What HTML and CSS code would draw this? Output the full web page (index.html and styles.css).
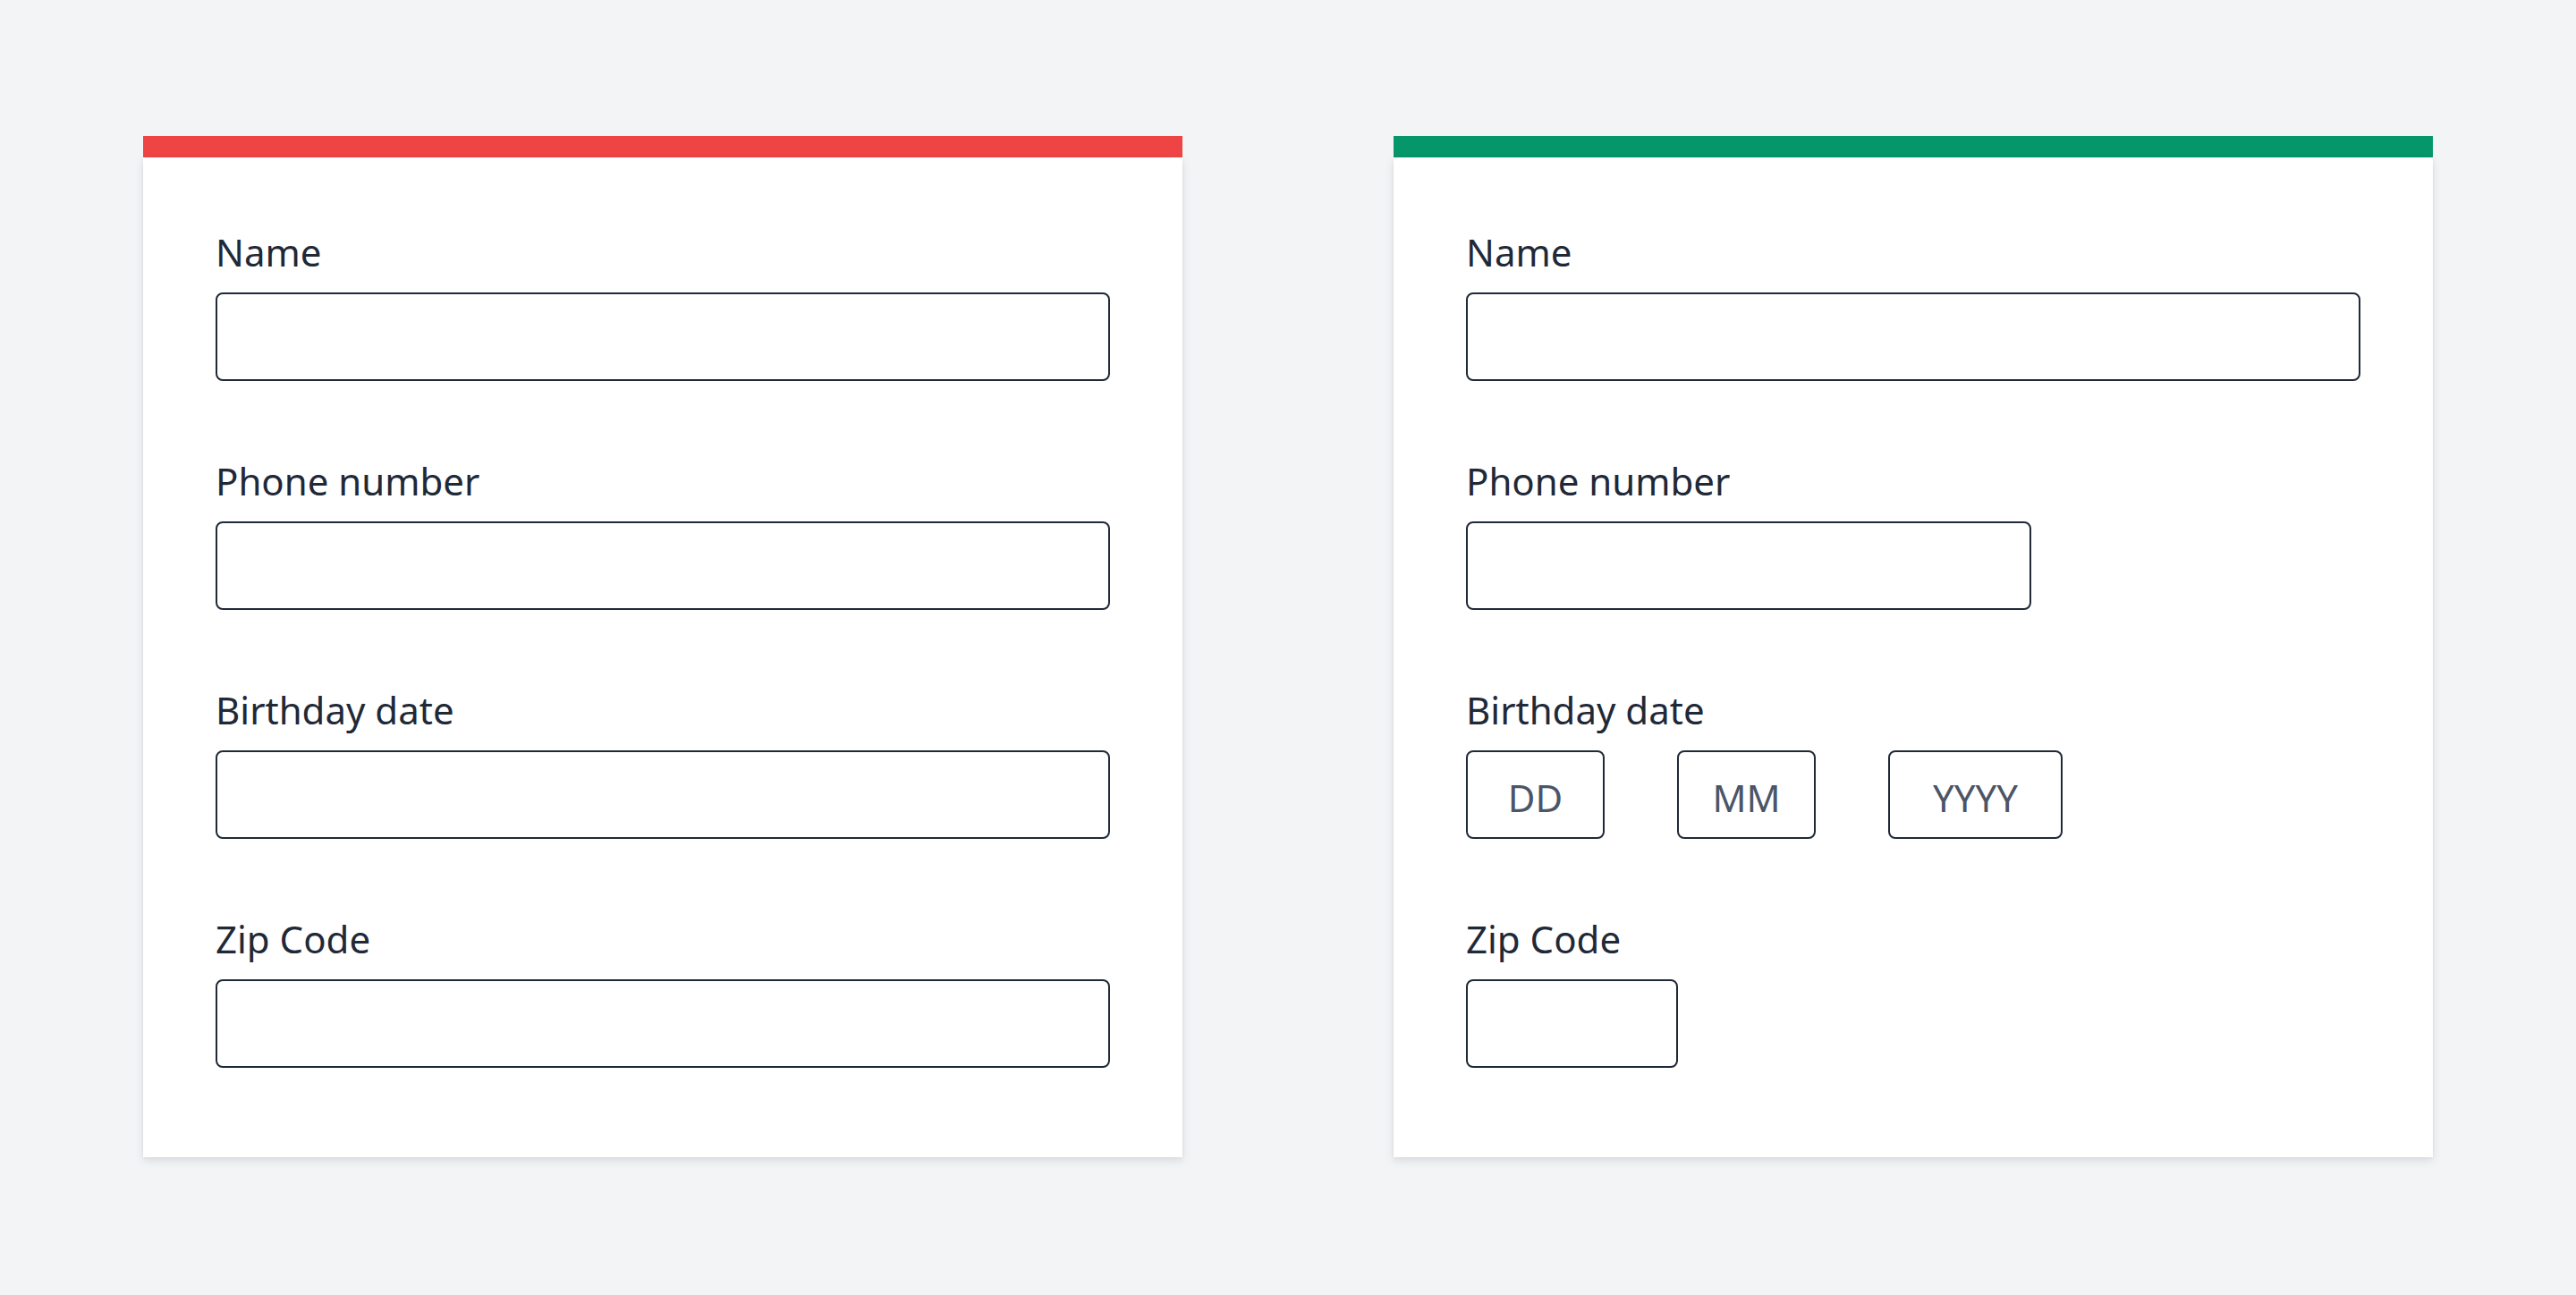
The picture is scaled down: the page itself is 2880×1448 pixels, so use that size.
FILE: index.html
```html
<!DOCTYPE html>
<html lang="en">
<head>
<meta charset="utf-8">
<title>Form field widths</title>
<link rel="stylesheet" href="styles.css">
</head>
<body>
<main class="compare">
  <section class="card">
    <div class="card-bar card-bar--bad"></div>
    <div class="card-body">
      <div class="field">
        <div class="field-label">Name</div>
        <div class="box box--full"></div>
      </div>
      <div class="field">
        <div class="field-label">Phone number</div>
        <div class="box box--full"></div>
      </div>
      <div class="field">
        <div class="field-label">Birthday date</div>
        <div class="box box--full"></div>
      </div>
      <div class="field">
        <div class="field-label">Zip Code</div>
        <div class="box box--full"></div>
      </div>
    </div>
  </section>

  <section class="card">
    <div class="card-bar card-bar--good"></div>
    <div class="card-body">
      <div class="field">
        <div class="field-label">Name</div>
        <div class="box box--full"></div>
      </div>
      <div class="field">
        <div class="field-label">Phone number</div>
        <div class="box box--phone"></div>
      </div>
      <div class="field">
        <div class="field-label">Birthday date</div>
        <div class="date-row">
          <div class="box box--day">DD</div>
          <div class="box box--day">MM</div>
          <div class="box box--year">YYYY</div>
        </div>
      </div>
      <div class="field">
        <div class="field-label">Zip Code</div>
        <div class="box box--zip"></div>
      </div>
    </div>
  </section>
</main>
</body>
</html>
```

FILE: styles.css
```css
html, body {
  margin: 0;
  padding: 0;
}

body {
  background: #f3f4f6;
  font-family: "Noto Sans", "Open Sans", sans-serif;
  color: #1f2937;
  width: 2880px;
  height: 1448px;
  overflow: hidden;
}

.compare {
  display: flex;
  gap: 236px;
  padding: 152px 160px 0 160px;
}

.card {
  width: 1162px;
  display: flex;
  flex-direction: column;
}

.card-bar {
  height: 24px;
}

.card-bar--bad {
  background: #ef4444;
}

.card-bar--good {
  background: #059669;
}

.card-body {
  background: #ffffff;
  padding: 76px 81px 100px 81px;
  display: flex;
  flex-direction: column;
  gap: 82px;
  box-shadow: 0 4px 10px rgba(15, 23, 42, 0.1), 0 1px 3px rgba(15, 23, 42, 0.06);
}

.field {
  display: flex;
  flex-direction: column;
  gap: 15px;
}

.field-label {
  font-size: 42px;
  line-height: 60px;
  height: 60px;
  color: #1f2937;
}

.box {
  box-sizing: border-box;
  height: 99px;
  border: 2px solid #1f2937;
  border-radius: 8px;
  background: #ffffff;
  display: flex;
  align-items: center;
  justify-content: center;
  font-size: 42px;
  color: #4b5568;
  padding-top: 6px;
}

.box--full {
  width: 1000px;
}

.box--phone {
  width: 632px;
}

.box--zip {
  width: 237px;
}

.date-row {
  display: flex;
  gap: 81px;
}

.box--day {
  width: 155px;
}

.box--year {
  width: 195px;
}
```
